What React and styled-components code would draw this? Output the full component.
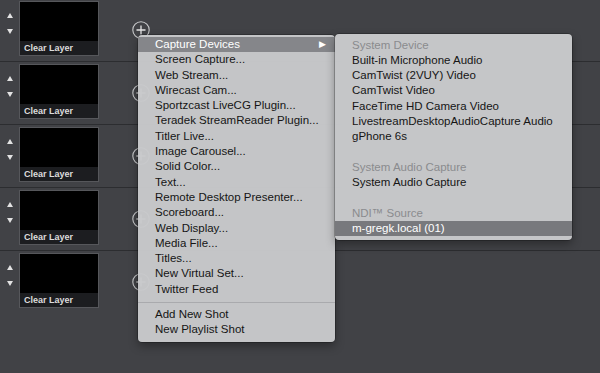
import styled, { createGlobalStyle } from 'styled-components';

const GlobalStyle = createGlobalStyle`
  html, body {
    margin: 0;
    padding: 0;
    background: #414246;
    overflow: hidden;
  }
  body {
    font-family: "Liberation Sans", Arial, sans-serif;
  }
`;

const layers = [1, 2, 3, 4, 5];

const mainItems = [
  'Screen Capture...',
  'Web Stream...',
  'Wirecast Cam...',
  'Sportzcast LiveCG Plugin...',
  'Teradek StreamReader Plugin...',
  'Titler Live...',
  'Image Carousel...',
  'Solid Color...',
  'Text...',
  'Remote Desktop Presenter...',
  'Scoreboard...',
  'Web Display...',
  'Media File...',
  'Titles...',
  'New Virtual Set...',
  'Twitter Feed',
];

const subGroups = [
  { title: 'System Device', items: ['Built-in Microphone Audio', 'CamTwist (2VUY) Video', 'CamTwist Video', 'FaceTime HD Camera Video', 'LivestreamDesktopAudioCapture Audio', 'gPhone 6s'] },
  { title: 'System Audio Capture', items: ['System Audio Capture'] },
  { title: 'NDI™ Source', items: ['m-gregk.local (01)'], active: 0 },
];

function App() {
  return (
    <Screen>
      <GlobalStyle />
      <LayerList>
        {layers.map((n) => (
          <LayerRow key={n}>
            <Arrows>
              <ArrowUp />
              <ArrowDown />
            </Arrows>
            <Thumb>
              <ThumbLabel>Clear Layer</ThumbLabel>
            </Thumb>
            <AddButton>
              <svg width="18" height="18" viewBox="0 0 18 18">
                <circle cx="9" cy="9" r="8.2" fill="none" stroke="#c9cacc" strokeWidth="1.1" />
                <path d="M9 4.5v9M4.5 9h9" stroke="#e6e6e6" strokeWidth="1.3" />
              </svg>
            </AddButton>
          </LayerRow>
        ))}
      </LayerList>

      <Menu>
        <Item $active>
          Capture Devices
          <SubArrow>▶</SubArrow>
        </Item>
        {mainItems.map((t) => (
          <Item key={t}>{t}</Item>
        ))}
        <Separator />
        <Item>Add New Shot</Item>
        <Item>New Playlist Shot</Item>
      </Menu>

      <SubMenu>
        {subGroups.map((g, gi) => (
          <Group key={g.title}>
            {gi > 0 && <Spacer />}
            <Header>{g.title}</Header>
            {g.items.map((t, i) => (
              <SubItem key={t} $active={g.active === i}>{t}</SubItem>
            ))}
          </Group>
        ))}
      </SubMenu>
    </Screen>
  );
}

export default App;

const Screen = styled.div`
  position: relative;
  width: 600px;
  height: 373px;
  overflow: hidden;
  background: #414246;
`;

const LayerList = styled.div`
  display: flex;
  flex-direction: column;
  margin-top: -1px;
`;

const LayerRow = styled.div`
  display: flex;
  align-items: flex-start;
  height: 62px;
  border-bottom: 1px solid #2c2d30;
  box-sizing: content-box;

  &:last-child {
    border-bottom: none;
  }
`;

const Arrows = styled.div`
  width: 19px;
  display: flex;
  flex-direction: column;
  align-items: center;
  gap: 11px;
  padding-top: 14px;
`;

const ArrowUp = styled.span`
  width: 0;
  height: 0;
  border-left: 3px solid transparent;
  border-right: 3px solid transparent;
  border-bottom: 5px solid #e2e2e2;
`;

const ArrowDown = styled.span`
  width: 0;
  height: 0;
  border-left: 3px solid transparent;
  border-right: 3px solid transparent;
  border-top: 5px solid #e2e2e2;
`;

const Thumb = styled.div`
  margin-top: 2px;
  width: 78px;
  height: 53px;
  background: #000;
  border: 1px solid #56575b;
  display: flex;
  flex-direction: column;
  justify-content: flex-end;
`;

const ThumbLabel = styled.div`
  height: 14px;
  background: #1c1d20;
  color: #dcdcdc;
  font-size: 9px;
  font-weight: bold;
  line-height: 15px;
  padding-left: 4px;
`;

const AddButton = styled.div`
  margin-left: 33px;
  margin-top: 22px;
  width: 18px;
  height: 18px;
  display: flex;
`;

const Menu = styled.div`
  position: absolute;
  left: 138px;
  top: 35px;
  width: 197px;
  padding: 2px 0 4px;
  background: rgba(200, 201, 203, 0.97);
  border-radius: 4px;
  box-shadow: 0 0 0 0.5px rgba(0, 0, 0, 0.45), 0 4px 10px rgba(0, 0, 0, 0.35);
  overflow: hidden;
  font-size: 11.5px;
`;

const Item = styled.div`
  position: relative;
  height: 15.3px;
  line-height: 15.3px;
  padding-left: 17px;
  white-space: nowrap;
  color: ${(p) => (p.$active ? '#ffffff' : '#151515')};
  background: ${(p) => (p.$active ? '#85868a' : 'transparent')};
`;

const SubArrow = styled.span`
  position: absolute;
  right: 9px;
  top: 0;
  font-size: 9px;
  color: #fff;
`;

const Separator = styled.div`
  height: 1px;
  margin: 5px 0 4px;
  background: #a9aaad;
`;

const SubMenu = styled.div`
  position: absolute;
  left: 335px;
  top: 34px;
  width: 237px;
  padding: 3.5px 0 3.5px;
  background: rgba(200, 201, 203, 0.98);
  border-radius: 4px;
  box-shadow: 0 0 0 0.5px rgba(0, 0, 0, 0.45), 0 4px 10px rgba(0, 0, 0, 0.35);
  overflow: hidden;
  font-size: 11.5px;
`;

const Group = styled.div`
  display: flex;
  flex-direction: column;
`;

const Spacer = styled.div`
  height: 15.3px;
`;

const Header = styled.div`
  height: 15.3px;
  line-height: 15.3px;
  padding-left: 17px;
  color: #8a8b8e;
`;

const SubItem = styled.div`
  height: 15.3px;
  line-height: 15.3px;
  padding-left: 17px;
  white-space: nowrap;
  color: ${(p) => (p.$active ? '#ffffff' : '#151515')};
  background: ${(p) => (p.$active ? '#78797d' : 'transparent')};
`;
